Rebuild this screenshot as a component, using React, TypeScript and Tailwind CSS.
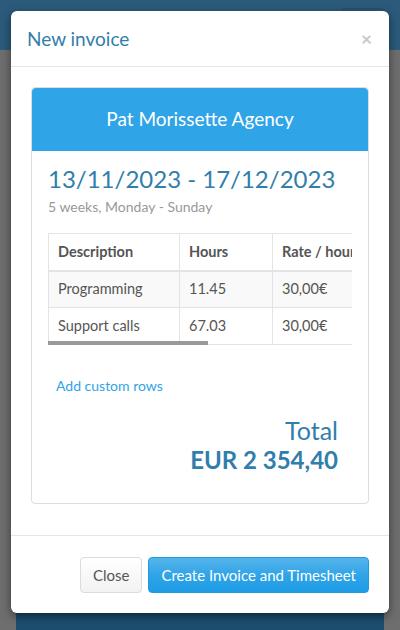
import React from 'react';

const rows = [
  { desc: 'Programming', hours: '11.45', rate: '30,00€', amount: '343,50€', tax: '0%' },
  { desc: 'Support calls', hours: '67.03', rate: '30,00€', amount: '2 010,90€', tax: '0%' },
];

function App() {
  return (
    <div className="relative w-[400px] h-[630px] overflow-hidden bg-[#6e6e6e] font-['Lato','Open_Sans',sans-serif]">
      {/* Page behind the backdrop */}
      <div className="h-[50px] bg-[#2b5a7b] flex justify-end items-start pr-[15px] pt-[8px]">
        <div className="w-[44px] h-[36px] rounded border border-[#23506f] bg-[#285674]" />
      </div>
      <div className="pt-[563px] px-4">
        <div className="h-[40px] bg-[#1c4d6f] flex justify-between px-4 pt-[12px] text-[14px] text-[#a9bccb]">
          <span>Heidi Weissbach</span>
          <span>↑</span>
        </div>
      </div>

      {/* Modal */}
      <div className="absolute left-[11px] top-[11px] w-[378px] bg-white rounded-md shadow-[0_3px_9px_rgba(0,0,0,0.5)]">
        <div className="flex items-center justify-between px-4 py-[15px] border-b border-[#e5e5e5]">
          <h4 className="text-[19px] leading-[25px] text-[#317eac]">New invoice</h4>
          <span className="text-[19px] leading-none font-bold text-[#c8c8c8] mr-[1px]">×</span>
        </div>

        <div className="px-5 pt-5 pb-[31px]">
          <div className="border border-[#dddddd] rounded">
            <div className="h-[63px] bg-[#2fa4e7] rounded-t flex items-center justify-center text-white text-[19px]">
              Pat Morissette Agency
            </div>
            <div className="px-4 pt-[13px] pb-[28px]">
              <div className="text-[24px] leading-[30px] text-[#317eac] whitespace-nowrap">13/11/2023 - 17/12/2023</div>
              <div className="mt-[3px] text-[14px] leading-[20px] text-[#999999]">5 weeks, Monday - Sunday</div>

              <div className="relative mt-[16px] overflow-hidden">
                <table className="w-[580px] border-collapse text-[14.5px] text-[#555555] table-fixed">
                  <thead>
                    <tr>
                      <th className="w-[131px] h-[37px] px-[9px] text-left font-bold border border-[#e3e3e3] border-b-2">Description</th>
                      <th className="w-[93px] px-[9px] text-left font-bold border border-[#e3e3e3] border-b-2">Hours</th>
                      <th className="w-[116px] px-[9px] text-left font-bold border border-[#e3e3e3] border-b-2 whitespace-nowrap">Rate / hour</th>
                      <th className="w-[130px] px-[9px] text-left font-bold border border-[#e3e3e3] border-b-2">Amount</th>
                      <th className="w-[110px] px-[9px] text-left font-bold border border-[#e3e3e3] border-b-2">Tax</th>
                    </tr>
                  </thead>
                  <tbody>
                    {rows.map((r, i) => (
                      <tr key={r.desc} className={i % 2 === 0 ? 'bg-[#f9f9f9]' : 'bg-white'}>
                        <td className="h-[37px] px-[9px] border border-[#e3e3e3]">{r.desc}</td>
                        <td className="px-[9px] border border-[#e3e3e3]">{r.hours}</td>
                        <td className="px-[9px] border border-[#e3e3e3]">{r.rate}</td>
                        <td className="px-[9px] border border-[#e3e3e3]">{r.amount}</td>
                        <td className="px-[9px] border border-[#e3e3e3]">{r.tax}</td>
                      </tr>
                    ))}
                  </tbody>
                </table>
                {/* overlay scrollbar thumb */}
                <div className="absolute left-0 bottom-0 w-[160px] h-[4px] bg-[#8f8f8f]/90" />
              </div>

              <div className="mt-[31px] px-2 text-[14px] leading-[20px] text-[#2fa4e7]">Add custom rows</div>

              <div className="mt-[19px] pr-[14px] text-right text-[#317eac]">
                <div className="text-[25px] leading-[30px]">Total</div>
                <div className="text-[24px] leading-[30px] font-bold">EUR 2 354,40</div>
              </div>
            </div>
          </div>
        </div>

        <div className="border-t border-[#e5e5e5] px-5 pt-[21px] pb-[20px] flex justify-end gap-[6px]">
          <button className="h-[36px] px-[12px] rounded border border-[#dcdcdc] bg-gradient-to-b from-white to-[#f2f2f2] text-[15px] text-[#555555]">
            Close
          </button>
          <button className="h-[36px] px-[12px] rounded border border-[#1f9be2] bg-gradient-to-b from-[#54b4eb] via-[#2fa4e7] to-[#1d9ce5] text-[15px] text-white">
            Create Invoice and Timesheet
          </button>
        </div>
      </div>
    </div>
  );
}

export default App;
